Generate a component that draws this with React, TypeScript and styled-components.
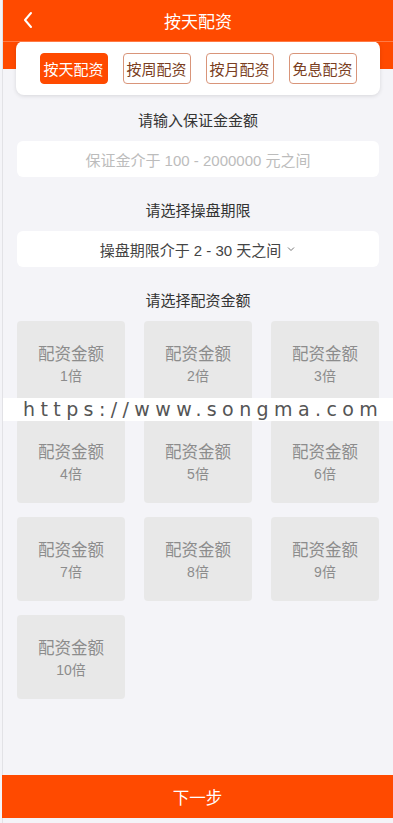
import React, {useState} from 'react'
import styled, {createGlobalStyle} from 'styled-components'

const ORANGE = '#ff4a00'

const GlobalStyle = createGlobalStyle`
html, body {
    margin: 0;
    padding: 0;
    background: #f4f4f8;
    font-family: "Liberation Sans", "Noto Sans CJK SC", sans-serif;
}
`

const Page = styled.div`
min-height: 823px;
margin-left: 2px;
border-left: 1px solid #e2e2e6;
background: #f4f4f8;
position: relative;
`

const Header = styled.div`
height: 41px;
background: ${ORANGE};
border-bottom: 1px solid #ff7a45;
display: flex;
align-items: center;
justify-content: center;
position: relative;
color: #fff;
font-size: 17px;
`

const Back = styled.div`
position: absolute;
left: 17px;
top: 11px;
width: 18px;
height: 18px;
`

const Band = styled.div`
background: linear-gradient(${ORANGE} 0, ${ORANGE} 28px, #f4f4f8 28px);
padding: 0 13px 0 13px;
margin-top: -1px;
`

const TabCard = styled.div`
background: #fff;
border-radius: 8px;
box-shadow: 0 1px 4px rgba(0,0,0,0.12);
height: 54px;
display: flex;
align-items: center;
justify-content: center;
gap: 15px;
`

const Tab = styled.div<{active?: boolean}>`
width: 68px;
height: 31px;
box-sizing: border-box;
border-radius: 4px;
border: 1px solid ${p => p.active ? ORANGE : '#d9957a'};
background: ${p => p.active ? ORANGE : '#fff'};
color: ${p => p.active ? '#fff' : '#7a3e22'};
font-size: 15px;
display: flex;
align-items: center;
justify-content: center;
`

const Body = styled.div`
padding: 16px 14px 120px 14px;
display: flex;
flex-direction: column;
`

const Label = styled.div`
text-align: center;
font-size: 15px;
color: #333;
line-height: 20px;
margin-bottom: 10px;
`

const Field = styled.div<{muted?: boolean}>`
height: 36px;
background: #fff;
border-radius: 6px;
display: flex;
align-items: center;
justify-content: center;
gap: 5px;
font-size: 15px;
color: ${p => p.muted ? '#bcbcbc' : '#444'};
margin-bottom: 24px;
`

const Grid = styled.div`
display: grid;
grid-template-columns: repeat(3, 1fr);
column-gap: 19px;
row-gap: 14px;
`

const Cell = styled.div`
height: 84px;
box-sizing: border-box;
padding-top: 4px;
background: #e8e8e8;
border-radius: 4px;
display: flex;
flex-direction: column;
align-items: center;
justify-content: center;
color: #8c8c8c;
`

const CellTitle = styled.div`
font-size: 16.5px;
line-height: 22px;
`

const CellSub = styled.div`
font-size: 14px;
line-height: 22px;
`

const Watermark = styled.div`
position: absolute;
left: 0;
right: 0;
top: 398px;
height: 23px;
background: #fff;
color: #555;
font-size: 19px;
letter-spacing: 5.4px;
line-height: 23px;
padding-left: 20px;
white-space: nowrap;
overflow: hidden;
font-family: "DejaVu Sans", sans-serif;
`

const NextButton = styled.div`
position: fixed;
left: 2px;
right: 0;
bottom: 5px;
height: 43px;
background: ${ORANGE};
color: #fff;
font-size: 16.5px;
display: flex;
align-items: center;
justify-content: center;
`

const tabs = ['按天配资', '按周配资', '按月配资', '免息配资']

export default function App() {
    const [active, setActive] = useState(0)
    const multiples = [1, 2, 3, 4, 5, 6, 7, 8, 9, 10]
    return (
        <Page>
            <GlobalStyle/>
            <Header>
                <Back>
                    <svg width="18" height="18" viewBox="0 0 18 18">
                        <path d="M11 2 L5 9 L11 16" fill="none" stroke="#fff" strokeWidth="2" strokeLinecap="round" strokeLinejoin="round"/>
                    </svg>
                </Back>
                {tabs[active]}
            </Header>
            <Band>
                <TabCard>
                    {tabs.map((t, i) => (
                        <Tab key={t} active={i === active} onClick={() => setActive(i)}>{t}</Tab>
                    ))}
                </TabCard>
            </Band>
            <Body>
                <Label>请输入保证金金额</Label>
                <Field muted>保证金介于 100 - 2000000 元之间</Field>
                <Label>请选择操盘期限</Label>
                <Field>
                    操盘期限介于 2 - 30 天之间
                    <svg width="10" height="10" viewBox="0 0 10 10">
                        <path d="M2 3.5 L5 6.5 L8 3.5" fill="none" stroke="#777" strokeWidth="1"/>
                    </svg>
                </Field>
                <Label>请选择配资金额</Label>
                <Grid>
                    {multiples.map(m => (
                        <Cell key={m}>
                            <CellTitle>配资金额</CellTitle>
                            <CellSub>{m}倍</CellSub>
                        </Cell>
                    ))}
                </Grid>
            </Body>
            <Watermark>https://www.songma.com</Watermark>
            <NextButton>下一步</NextButton>
        </Page>
    )
}
